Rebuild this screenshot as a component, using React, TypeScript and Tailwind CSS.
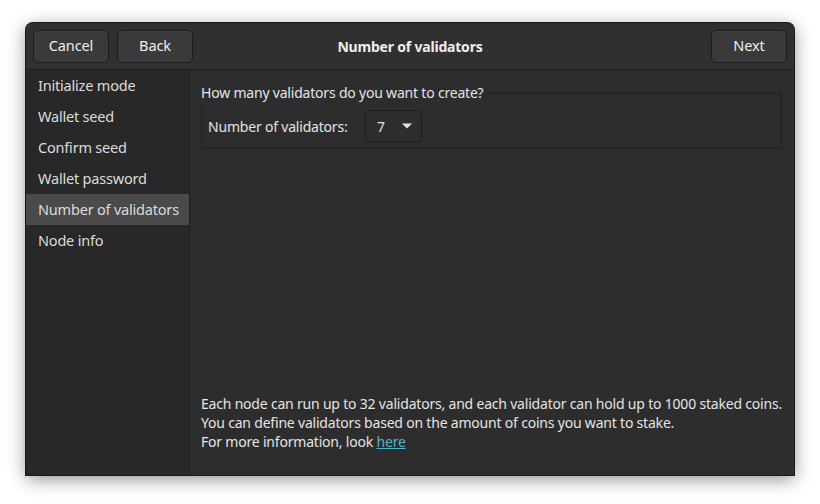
const steps = ['Initialize mode', 'Wallet seed', 'Confirm seed', 'Wallet password', 'Number of validators', 'Node info']

function HeaderButton({ label }: { label: string }) {
  return (
    <button className="h-[33px] w-[76px] rounded-[5px] border border-[#1c1c1c] bg-[#3a3a3a] text-[14.5px] tracking-[-0.1px] text-[#eeeeec] shadow-[inset_0_1px_0_rgba(255,255,255,0.04)]">
      {label}
    </button>
  )
}

export default function App() {
  return (
    <div className="h-[504px] w-[820px] bg-white pl-[26px] pt-[23px] font-['Noto_Sans',sans-serif] tracking-[-0.2px]">
      <div className="flex h-[452px] w-[768px] flex-col overflow-hidden rounded-t-[7px] bg-[#2d2d2d] shadow-[0_4px_18px_rgba(0,0,0,0.45)] ring-1 ring-[#1a1a1a]">
        <div className="grid h-[47px] shrink-0 grid-cols-[1fr_auto_1fr] items-center border-b border-[#1f1f1f] bg-[#303030] px-[7px]">
          <div className="flex gap-2">
            <HeaderButton label="Cancel" />
            <HeaderButton label="Back" />
          </div>
          <div className="text-center text-[14px] font-bold text-[#eeeeec]">Number of validators</div>
          <div className="flex justify-end">
            <HeaderButton label="Next" />
          </div>
        </div>
        <div className="flex flex-1">
          <div className="w-[164px] shrink-0 border-r border-[#1f1f1f] bg-[#282828]">
            {steps.map((s) => (
              <div
                key={s}
                className={`flex h-[31px] items-center whitespace-nowrap px-3 text-[14.5px] text-[#dcdcdc] ${s === 'Number of validators' ? 'bg-[#4a4a4a]' : ''}`}
              >
                {s}
              </div>
            ))}
          </div>
          <div className="flex flex-1 flex-col pb-[24px] pl-[11px] pr-3 pt-[23px] text-[14px] text-[#e4e4e4]">
            <div className="relative h-[56px] rounded-[2px] border border-[#202020] px-[6px] pt-[16px]">
              <div className="absolute -top-[11px] left-[-1px] bg-[#2d2d2d] pr-1 leading-[20px]">How many validators do you want to create?</div>
              <div className="flex items-center">
                <span className="w-[157px]">Number of validators:</span>
                <div className="flex h-[32px] w-[57px] items-center justify-between rounded-[4px] border border-[#1c1c1c] bg-[#2e2e2e] pl-[11px] pr-[8px]">
                  <span>7</span>
                  <svg width="12" height="8" viewBox="0 0 12 8"><path d="M1 1.5h10L6 6.5z" fill="#e4e4e4" /></svg>
                </div>
              </div>
            </div>
            <div className="mt-auto whitespace-nowrap leading-[19px]">
              <p>Each node can run up to 32 validators, and each validator can hold up to 1000 staked coins.</p>
              <p>You can define validators based on the amount of coins you want to stake.</p>
              <p>
                For more information, look <a className="text-[#4fb5c7] underline">here</a>
              </p>
            </div>
          </div>
        </div>
      </div>
    </div>
  )
}
